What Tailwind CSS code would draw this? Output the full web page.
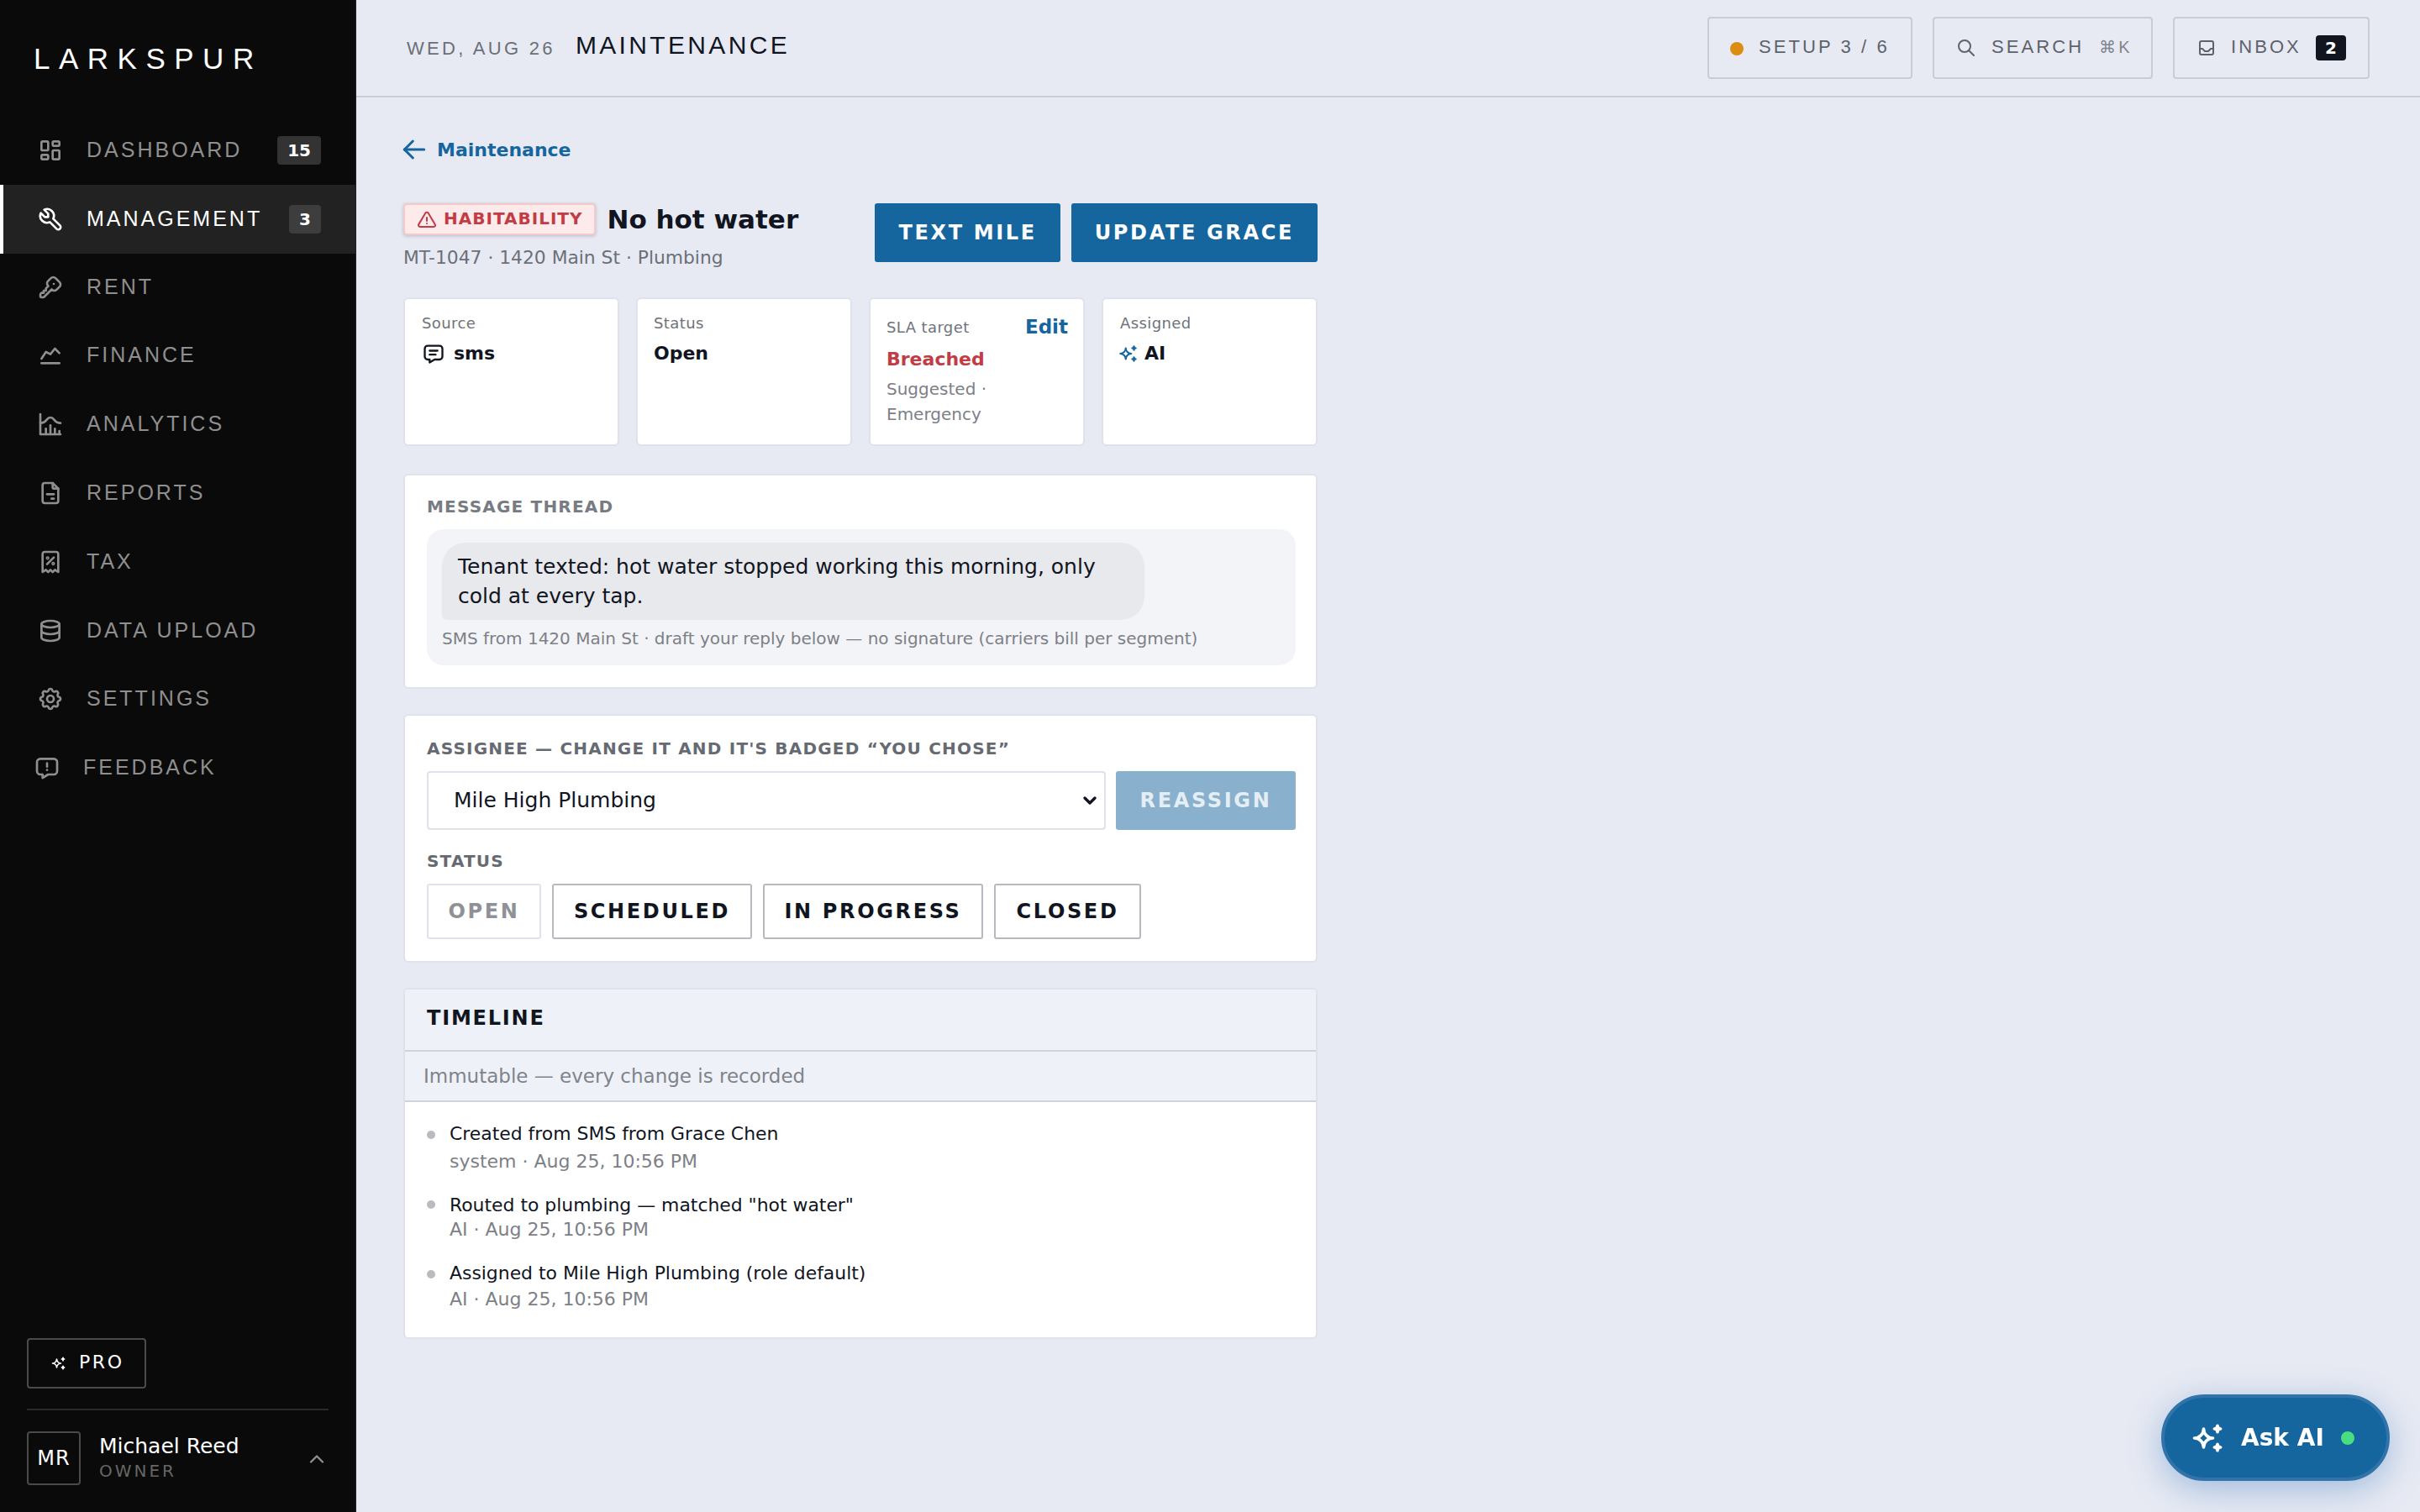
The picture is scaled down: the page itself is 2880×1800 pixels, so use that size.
<!DOCTYPE html>
<html lang="en">
  <head>
    <meta name="viewport" content="width=device-width, initial-scale=1.0" />
    <meta charset="utf-8" />
    <title>Larkspur</title>
    <script src="https://cdn.jsdelivr.net/npm/@tailwindcss/browser@4"></script>
  </head>
  <body class="h-[1800px] w-[2880px] overflow-hidden bg-[#e7eaf3] font-['DejaVu_Sans',sans-serif] text-[#11151f]">
    <div class="flex h-full">
      <!-- sidebar -->
      <aside class="flex h-full w-[424px] shrink-0 flex-col border-r border-[#222] bg-[#0a0a0a] text-[#8f8f8f]">
        <div class="pt-[49px] pl-[40px] font-['Liberation_Sans',sans-serif] text-[35px] leading-[41px] tracking-[10.5px] text-white">LARKSPUR</div>
        <nav class="mt-[48px] flex flex-col font-['Liberation_Sans',sans-serif] text-[25px] tracking-[3px]">
          <a class="flex h-[82px] items-center gap-[27px] pr-[41px] pl-[44px]">
            <svg class="size-[32px] shrink-0" viewBox="0 0 24 24" fill="none" stroke="currentColor" stroke-width="2" stroke-linecap="round" stroke-linejoin="round"><path d="M5 4h4a1 1 0 0 1 1 1v6a1 1 0 0 1 -1 1h-4a1 1 0 0 1 -1 -1v-6a1 1 0 0 1 1 -1" /><path d="M5 16h4a1 1 0 0 1 1 1v2a1 1 0 0 1 -1 1h-4a1 1 0 0 1 -1 -1v-2a1 1 0 0 1 1 -1" /><path d="M15 12h4a1 1 0 0 1 1 1v6a1 1 0 0 1 -1 1h-4a1 1 0 0 1 -1 -1v-6a1 1 0 0 1 1 -1" /><path d="M15 4h4a1 1 0 0 1 1 1v2a1 1 0 0 1 -1 1h-4a1 1 0 0 1 -1 -1v-2a1 1 0 0 1 1 -1" /></svg>
            <span class="mr-auto">DASHBOARD</span>
            <span class="flex h-[34px] items-center rounded-[4px] bg-[#333] px-[12px] font-['DejaVu_Sans',sans-serif] text-[20px] font-bold tracking-normal text-white">15</span>
          </a>
          <a class="flex h-[82px] items-center gap-[27px] border-l-4 border-white bg-[#222] pr-[41px] pl-[40px] text-white">
            <svg class="size-[32px] shrink-0" viewBox="0 0 24 24" fill="none" stroke="currentColor" stroke-width="2" stroke-linecap="round" stroke-linejoin="round"><path d="M7 10h3v-3l-3.5 -3.5a6 6 0 0 1 8 8l6 6a2 2 0 0 1 -3 3l-6 -6a6 6 0 0 1 -8 -8l3.5 3.5" /></svg>
            <span class="mr-auto">MANAGEMENT</span>
            <span class="flex h-[34px] items-center rounded-[4px] bg-[#3d3d3d] px-[12px] font-['DejaVu_Sans',sans-serif] text-[20px] font-bold tracking-normal text-white">3</span>
          </a>
          <a class="flex h-[80px] items-center gap-[27px] pl-[44px]">
            <svg class="size-[32px] shrink-0" viewBox="0 0 24 24" fill="none" stroke="currentColor" stroke-width="2" stroke-linecap="round" stroke-linejoin="round"><path d="M16.555 3.843l3.602 3.602a2.877 2.877 0 0 1 0 4.069l-2.643 2.643a2.877 2.877 0 0 1 -4.069 0l-.301 -.301l-6.558 6.558a2 2 0 0 1 -1.239 .578l-.175 .008h-1.172a1 1 0 0 1 -.993 -.883l-.007 -.117v-1.172a2 2 0 0 1 .467 -1.284l.119 -.13l.414 -.414h2v-2h2v-2l2.144 -2.144l-.301 -.301a2.877 2.877 0 0 1 0 -4.069l2.643 -2.643a2.877 2.877 0 0 1 4.069 0z" /><path d="M15 9h.01" /></svg>
            <span>RENT</span>
          </a>
          <a class="flex h-[82px] items-center gap-[27px] pl-[44px]">
            <svg class="size-[32px] shrink-0" viewBox="0 0 24 24" fill="none" stroke="currentColor" stroke-width="2" stroke-linecap="round" stroke-linejoin="round"><path d="M4 19l16 0" /><path d="M4 15l4 -6l4 2l4 -5l4 4" /></svg>
            <span>FINANCE</span>
          </a>
          <a class="flex h-[82px] items-center gap-[27px] pl-[44px]">
            <svg class="size-[32px] shrink-0" viewBox="0 0 24 24" fill="none" stroke="currentColor" stroke-width="2" stroke-linecap="round" stroke-linejoin="round"><path d="M3 3v18h18" /><path d="M20 18v3" /><path d="M16 16v5" /><path d="M12 13v8" /><path d="M8 16v5" /><path d="M3 11c6 0 5 -5 9 -5s3 5 9 5" /></svg>
            <span>ANALYTICS</span>
          </a>
          <a class="flex h-[82px] items-center gap-[27px] pl-[44px]">
            <svg class="size-[32px] shrink-0" viewBox="0 0 24 24" fill="none" stroke="currentColor" stroke-width="2" stroke-linecap="round" stroke-linejoin="round"><path d="M14 3v4a1 1 0 0 0 1 1h4" /><path d="M17 21h-10a2 2 0 0 1 -2 -2v-14a2 2 0 0 1 2 -2h7l5 5v11a2 2 0 0 1 -2 2z" /><path d="M9 13h6" /><path d="M13 17h2" /></svg>
            <span>REPORTS</span>
          </a>
          <a class="flex h-[82px] items-center gap-[27px] pl-[44px]">
            <svg class="size-[32px] shrink-0" viewBox="0 0 24 24" fill="none" stroke="currentColor" stroke-width="2" stroke-linecap="round" stroke-linejoin="round"><path d="M9 14l6 -6" /><circle cx="9.5" cy="8.5" r=".6" /><circle cx="14.5" cy="13.5" r=".6" /><path d="M5 21v-16a2 2 0 0 1 2 -2h10a2 2 0 0 1 2 2v16l-3 -2l-2 2l-2 -2l-2 2l-2 -2l-3 2" /></svg>
            <span>TAX</span>
          </a>
          <a class="flex h-[81px] items-center gap-[27px] pl-[44px]">
            <svg class="size-[32px] shrink-0" viewBox="0 0 24 24" fill="none" stroke="currentColor" stroke-width="2" stroke-linecap="round" stroke-linejoin="round"><path d="M12 6m-8 0a8 3 0 1 0 16 0a8 3 0 1 0 -16 0" /><path d="M4 6v6a8 3 0 0 0 16 0v-6" /><path d="M4 12v6a8 3 0 0 0 16 0v-6" /></svg>
            <span>DATA UPLOAD</span>
          </a>
          <a class="flex h-[82px] items-center gap-[27px] pl-[44px]">
            <svg class="size-[32px] shrink-0" viewBox="0 0 24 24" fill="none" stroke="currentColor" stroke-width="2" stroke-linecap="round" stroke-linejoin="round"><path d="M10.325 4.317c.426 -1.756 2.924 -1.756 3.35 0a1.724 1.724 0 0 0 2.573 1.066c1.543 -.94 3.31 .826 2.37 2.37a1.724 1.724 0 0 0 1.065 2.572c1.756 .426 1.756 2.924 0 3.35a1.724 1.724 0 0 0 -1.066 2.573c.94 1.543 -.826 3.31 -2.37 2.37a1.724 1.724 0 0 0 -2.572 1.065c-.426 1.756 -2.924 1.756 -3.35 0a1.724 1.724 0 0 0 -2.573 -1.066c-1.543 .94 -3.31 -.826 -2.37 -2.37a1.724 1.724 0 0 0 -1.065 -2.572c-1.756 -.426 -1.756 -2.924 0 -3.35a1.724 1.724 0 0 0 1.066 -2.573c-.94 -1.543 .826 -3.31 2.37 -2.37c1 .608 2.296 .07 2.572 -1.065z" /><path d="M9 12a3 3 0 1 0 6 0a3 3 0 0 0 -6 0" /></svg>
            <span>SETTINGS</span>
          </a>
          <a class="flex h-[82px] items-center gap-[27px] pl-[40px]">
            <svg class="size-[32px] shrink-0" viewBox="0 0 24 24" fill="none" stroke="currentColor" stroke-width="2" stroke-linecap="round" stroke-linejoin="round"><path d="M18 4a3 3 0 0 1 3 3v8a3 3 0 0 1 -3 3h-5l-5 3v-3h-2a3 3 0 0 1 -3 -3v-8a3 3 0 0 1 3 -3h12z" /><path d="M12 8v3" /><path d="M12 14v.01" /></svg>
            <span>FEEDBACK</span>
          </a>
        </nav>
        <div class="mt-auto px-[32px] pb-[32px]">
          <div class="flex h-[60px] w-[142px] items-center gap-[14px] rounded-[4px] border-2 border-[#4a4a4a] pl-[26px] text-[22px] tracking-[2.6px] text-white">
            <svg class="size-[20px] shrink-0" viewBox="0 0 24 24" fill="none" stroke="currentColor" stroke-width="2" stroke-linecap="round" stroke-linejoin="round"><path d="M16 18a2 2 0 0 1 2 2a2 2 0 0 1 2 -2a2 2 0 0 1 -2 -2a2 2 0 0 1 -2 2zm0 -12a2 2 0 0 1 2 2a2 2 0 0 1 2 -2a2 2 0 0 1 -2 -2a2 2 0 0 1 -2 2zm-7 12a6 6 0 0 1 6 -6a6 6 0 0 1 -6 -6a6 6 0 0 1 -6 6a6 6 0 0 1 6 6z" /></svg>
            <span class="-mt-[3px]">PRO</span>
          </div>
          <div class="mt-[24px] flex items-center border-t-2 border-[#2a2a2a] pt-[25px]">
            <div class="flex size-[64px] items-center justify-center rounded-[4px] border-2 border-[#4a4a4a] text-[24px] tracking-[1px] text-white">MR</div>
            <div class="ml-[22px]">
              <div class="-mt-[2px] text-[25px] leading-[32px] text-white">Michael Reed</div>
              <div class="text-[20px] leading-[26px] tracking-[3px] text-[#666]">OWNER</div>
            </div>
            <svg class="mt-[2px] ml-auto size-[28px]" viewBox="0 0 24 24" fill="none" stroke="currentColor" stroke-width="2" stroke-linecap="round" stroke-linejoin="round"><path d="M6 15l6 -6l6 6" /></svg>
          </div>
        </div>
      </aside>

      <div class="flex min-w-0 flex-1 flex-col">
        <!-- top bar -->
        <header class="flex h-[116px] shrink-0 items-center border-b-2 border-[#c9ccd6] pr-[60px] pb-[1px] pl-[60px] font-['Liberation_Sans',sans-serif]">
          <span class="mt-[1px] text-[22px] tracking-[3.3px] text-[#6b7078]">WED, AUG 26</span>
          <span class="-mt-[7px] ml-[24px] text-[30px] tracking-[3.35px] text-[#11151f]">MAINTENANCE</span>
          <div class="ml-auto flex gap-[24px] text-[22px] tracking-[3.08px] text-[#5d626c]">
            <div class="flex h-[74px] w-[244px] items-center gap-[18px] rounded-[4px] border-2 border-[#c9ccd6] pl-[25px]">
              <span class="mt-[2px] size-[16px] rounded-full bg-[#dd8c12]"></span>
              <span class="-mt-[2px]">SETUP 3 / 6</span>
            </div>
            <div class="flex h-[74px] w-[262px] items-center gap-[18px] rounded-[4px] border-2 border-[#c9ccd6] pl-[26px]">
              <svg class="size-[24px] shrink-0" viewBox="0 0 24 24" fill="none" stroke="currentColor" stroke-width="2" stroke-linecap="round" stroke-linejoin="round"><path d="M10 10m-7 0a7 7 0 1 0 14 0a7 7 0 1 0 -14 0" /><path d="M21 21l-6 -6" /></svg>
              <span class="-mt-[2px]">SEARCH</span>
              <span class="-mt-[2px] text-[20px] text-[#80858e]">⌘K</span>
            </div>
            <div class="flex h-[74px] w-[234px] items-center gap-[17px] rounded-[4px] border-2 border-[#c9ccd6] pl-[26px]">
              <svg class="size-[24px] shrink-0" viewBox="0 0 24 24" fill="none" stroke="currentColor" stroke-width="2" stroke-linecap="round" stroke-linejoin="round"><path d="M4 4m0 2a2 2 0 0 1 2 -2h12a2 2 0 0 1 2 2v12a2 2 0 0 1 -2 2h-12a2 2 0 0 1 -2 -2z" /><path d="M4 13h3l3 3h4l3 -3h3" /></svg>
              <span class="-mt-[2px]">INBOX</span>
              <span class="flex h-[30px] w-[36px] items-center justify-center rounded-[4px] bg-[#11151f] font-['DejaVu_Sans',sans-serif] text-[20px] font-bold tracking-normal text-white">2</span>
            </div>
          </div>
        </header>

        <main class="w-[1144px] pt-[50px] pl-[56px]">
          <a class="flex h-[24px] items-center gap-[7px] text-[22px] font-bold text-[#15659e]">
            <svg class="-ml-[7px] size-[40px] shrink-0" viewBox="0 0 24 24" fill="none" stroke="currentColor" stroke-width="1.8" stroke-linecap="round" stroke-linejoin="round"><path d="M5 12l14 0" /><path d="M5 12l6 6" /><path d="M5 12l6 -6" /></svg>
            Maintenance
          </a>

          <div class="mt-[52px] flex justify-between">
            <div>
              <div class="flex items-center gap-[13px]">
                <span class="flex h-[38px] items-center gap-[8px] rounded-[4px] border-2 border-[#f3c9c9] bg-[#fdeaea] px-[14px] pb-[2px] text-[20px] font-bold tracking-[1px] text-[#c23b45] shadow-[0_1px_4px_rgba(0,0,0,0.2)]">
                  <svg class="mt-[4px] size-[24px] shrink-0" viewBox="0 0 24 24" fill="none" stroke="currentColor" stroke-width="2" stroke-linecap="round" stroke-linejoin="round"><path d="M12 9v4" /><path d="M10.363 3.591l-8.106 13.534a1.914 1.914 0 0 0 1.636 2.871h16.214a1.914 1.914 0 0 0 1.636 -2.87l-8.106 -13.536a1.914 1.914 0 0 0 -3.274 0z" /><path d="M12 16h.01" /></svg>
                  HABITABILITY
                </span>
                <h1 class="text-[31px] leading-[38px] font-bold">No hot water</h1>
              </div>
              <p class="mt-[12px] text-[21.8px] leading-[30px] text-[#6b7078]">MT-1047 · 1420 Main St · Plumbing</p>
            </div>
            <div class="flex gap-[13px]">
              <button class="h-[70px] rounded-[3px] bg-[#15659e] px-[28px] text-[24px] font-bold tracking-[2.64px] text-white">TEXT MILE</button>
              <button class="h-[70px] rounded-[3px] bg-[#15659e] px-[28px] text-[24px] font-bold tracking-[2.64px] text-white">UPDATE GRACE</button>
            </div>
          </div>

          <!-- facts -->
          <div class="mt-[32px] grid h-[177px] grid-cols-4 gap-[20px]">
            <div class="rounded-[6px] border-2 border-[#dfe2ea] bg-white px-[20px] pt-[16px]">
              <div class="text-[18px] leading-[26px] tracking-[0.4px] text-[#6f737b]">Source</div>
              <div class="mt-[8px] flex items-center gap-[10px] text-[22px] leading-[30px] font-bold">
                <svg class="size-[28px] shrink-0" viewBox="0 0 24 24" fill="none" stroke="currentColor" stroke-width="2" stroke-linecap="round" stroke-linejoin="round"><path d="M8 9h8" /><path d="M8 13h6" /><path d="M18 4a3 3 0 0 1 3 3v8a3 3 0 0 1 -3 3h-5l-5 3v-3h-2a3 3 0 0 1 -3 -3v-8a3 3 0 0 1 3 -3h12z" /></svg>
                sms
              </div>
            </div>
            <div class="rounded-[6px] border-2 border-[#dfe2ea] bg-white pt-[16px] pr-[20px] pl-[19px]">
              <div class="text-[18px] leading-[26px] tracking-[0.4px] text-[#6f737b]">Status</div>
              <div class="mt-[8px] text-[22px] leading-[30px] font-bold">Open</div>
            </div>
            <div class="rounded-[6px] border-2 border-[#dfe2ea] bg-white pt-[18px] pr-[18px] pl-[19px]">
              <div class="flex items-center justify-between">
                <span class="pt-[3px] text-[18px] leading-[26px] tracking-[0.4px] text-[#6f737b]">SLA target</span>
                <span class="text-[23px] leading-[28px] font-bold text-[#15659e]">Edit</span>
              </div>
              <div class="mt-[10px] text-[22px] leading-[30px] font-bold text-[#c23b45]">Breached</div>
              <div class="mt-[5px] text-[20px] leading-[30px] text-[#7d8087]">Suggested · Emergency</div>
            </div>
            <div class="rounded-[6px] border-2 border-[#dfe2ea] bg-white px-[20px] pt-[16px]">
              <div class="text-[18px] leading-[26px] tracking-[0.4px] text-[#6f737b]">Assigned</div>
              <div class="mt-[8px] flex items-center gap-[6px] text-[22px] leading-[30px] font-bold">
                <svg class="-ml-[3px] size-[26px] shrink-0 text-[#15659e]" viewBox="0 0 24 24" fill="none" stroke="currentColor" stroke-width="2" stroke-linecap="round" stroke-linejoin="round"><path d="M16 18a2 2 0 0 1 2 2a2 2 0 0 1 2 -2a2 2 0 0 1 -2 -2a2 2 0 0 1 -2 2zm0 -12a2 2 0 0 1 2 2a2 2 0 0 1 2 -2a2 2 0 0 1 -2 -2a2 2 0 0 1 -2 2zm-7 12a6 6 0 0 1 6 -6a6 6 0 0 1 -6 -6a6 6 0 0 1 -6 6a6 6 0 0 1 6 6z" /></svg>
                AI
              </div>
            </div>
          </div>

          <!-- message thread -->
          <section class="mt-[33px] h-[256px] rounded-[6px] border-2 border-[#dfe2ea] bg-white pt-[24px] pr-[24px] pl-[26px]">
            <h2 class="text-[20px] leading-[26px] font-bold tracking-[1.2px] text-[#777b83]">MESSAGE THREAD</h2>
            <div class="mt-[14px] h-[162px] rounded-[20px] bg-[#f3f4f8] px-[18px] pt-[16px]">
              <div class="w-[836px] rounded-[28px] rounded-bl-[6px] bg-[#e8e9ed] px-[19px] py-[11px] text-[25px] leading-[35px] text-[#11151f]">Tenant texted: hot water stopped working this morning, only cold at every tap.</div>
              <p class="mt-[8px] text-[20px] leading-[28px] text-[#7d8087]">SMS from 1420 Main St · draft your reply below — no signature (carriers bill per segment)</p>
            </div>
          </section>

          <!-- assignee -->
          <section class="mt-[30px] h-[296px] rounded-[6px] border-2 border-[#dfe2ea] bg-white pt-[26px] pr-[24px] pl-[26px]">
            <h2 class="text-[20px] leading-[26px] font-bold tracking-[1.2px] text-[#666a72]">ASSIGNEE — CHANGE IT AND IT'S BADGED “YOU CHOSE”</h2>
            <div class="mt-[14px] flex gap-[12px]">
              <div class="flex h-[70px] flex-1 items-center justify-between rounded-[4px] border-2 border-[#dfe2ea] bg-white pr-[5px] pl-[30px] text-[25px]">
                Mile High Plumbing
                <svg class="size-[24px]" viewBox="0 0 24 24" fill="none" stroke="currentColor" stroke-width="3.4" stroke-linecap="round" stroke-linejoin="round"><path d="M6 9l6 6l6 -6" /></svg>
              </div>
              <button class="h-[70px] w-[214px] rounded-[3px] bg-[#89b1ce] text-[24px] font-bold tracking-[2.64px] text-[#e6eef5]">REASSIGN</button>
            </div>
            <h2 class="mt-[24px] text-[20px] leading-[26px] font-bold tracking-[1.2px] text-[#666a72]">STATUS</h2>
            <div class="mt-[14px] flex gap-[13px] text-[24px] font-bold tracking-[2.64px]">
              <button class="h-[66px] w-[136px] rounded-[3px] border-2 border-[#dfe2ea] text-[#8f9196]">OPEN</button>
              <button class="h-[66px] w-[238px] rounded-[3px] border-2 border-[#b7b9bf]">SCHEDULED</button>
              <button class="h-[66px] w-[262px] rounded-[3px] border-2 border-[#b7b9bf]">IN PROGRESS</button>
              <button class="h-[66px] w-[175px] rounded-[3px] border-2 border-[#b7b9bf]">CLOSED</button>
            </div>
          </section>

          <!-- timeline -->
          <section class="mt-[30px] h-[418px] overflow-hidden rounded-[6px] border-2 border-[#dfe2ea] bg-white">
            <h2 class="flex h-[74px] items-center border-b-2 border-[#cfd3dd] bg-[#eef1f8] pb-[4px] pl-[26px] text-[24px] font-bold tracking-[1.8px]">TIMELINE</h2>
            <p class="flex h-[60px] items-center border-b-2 border-[#cfd3dd] bg-[#eef1f8] pl-[22px] text-[23px] text-[#808389]">Immutable — every change is recorded</p>
            <ol class="flex flex-col gap-[22px] pt-[23px] pl-[26px]">
              <li class="relative pl-[27px]">
                <span class="absolute top-[11px] left-0 size-[10px] rounded-full bg-[#b9bbc0]"></span>
                <div class="text-[21.9px] leading-[30px]">Created from SMS from Grace Chen</div>
                <div class="mt-[3px] text-[22px] leading-[30px] text-[#7d8087]">system · Aug 25, 10:56 PM</div>
              </li>
              <li class="relative pl-[27px]">
                <span class="absolute top-[9px] left-0 size-[10px] rounded-full bg-[#b9bbc0]"></span>
                <div class="text-[21.9px] leading-[30px]">Routed to plumbing — matched "hot water"</div>
                <div class="-mt-[1px] text-[22px] leading-[30px] text-[#7d8087]">AI · Aug 25, 10:56 PM</div>
              </li>
              <li class="relative pl-[27px]">
                <span class="absolute top-[11px] left-0 size-[10px] rounded-full bg-[#b9bbc0]"></span>
                <div class="text-[21.9px] leading-[30px]">Assigned to Mile High Plumbing (role default)</div>
                <div class="mt-[1px] text-[22px] leading-[30px] text-[#7d8087]">AI · Aug 25, 10:56 PM</div>
              </li>
            </ol>
          </section>
        </main>
      </div>
    </div>

    <!-- floating assistant button -->
    <button class="fixed right-[36px] bottom-[37px] flex h-[103px] w-[272px] items-center rounded-full border-4 border-[#3274a9] bg-[#15659e] pl-[30px] text-[28px] font-bold text-white shadow-[0_10px_40px_rgba(30,100,180,0.35)]">
      <svg class="size-[44px] shrink-0" viewBox="0 0 24 24" fill="none" stroke="currentColor" stroke-width="2" stroke-linecap="round" stroke-linejoin="round"><path d="M16 18a2 2 0 0 1 2 2a2 2 0 0 1 2 -2a2 2 0 0 1 -2 -2a2 2 0 0 1 -2 2zm0 -12a2 2 0 0 1 2 2a2 2 0 0 1 2 -2a2 2 0 0 1 -2 -2a2 2 0 0 1 -2 2zm-7 12a6 6 0 0 1 6 -6a6 6 0 0 1 -6 -6a6 6 0 0 1 -6 6a6 6 0 0 1 6 6z" /></svg>
      <span class="ml-[17px]">Ask AI</span>
      <span class="ml-[20px] size-[16px] rounded-full bg-[#4ade80]"></span>
    </button>
  </body>
</html>
